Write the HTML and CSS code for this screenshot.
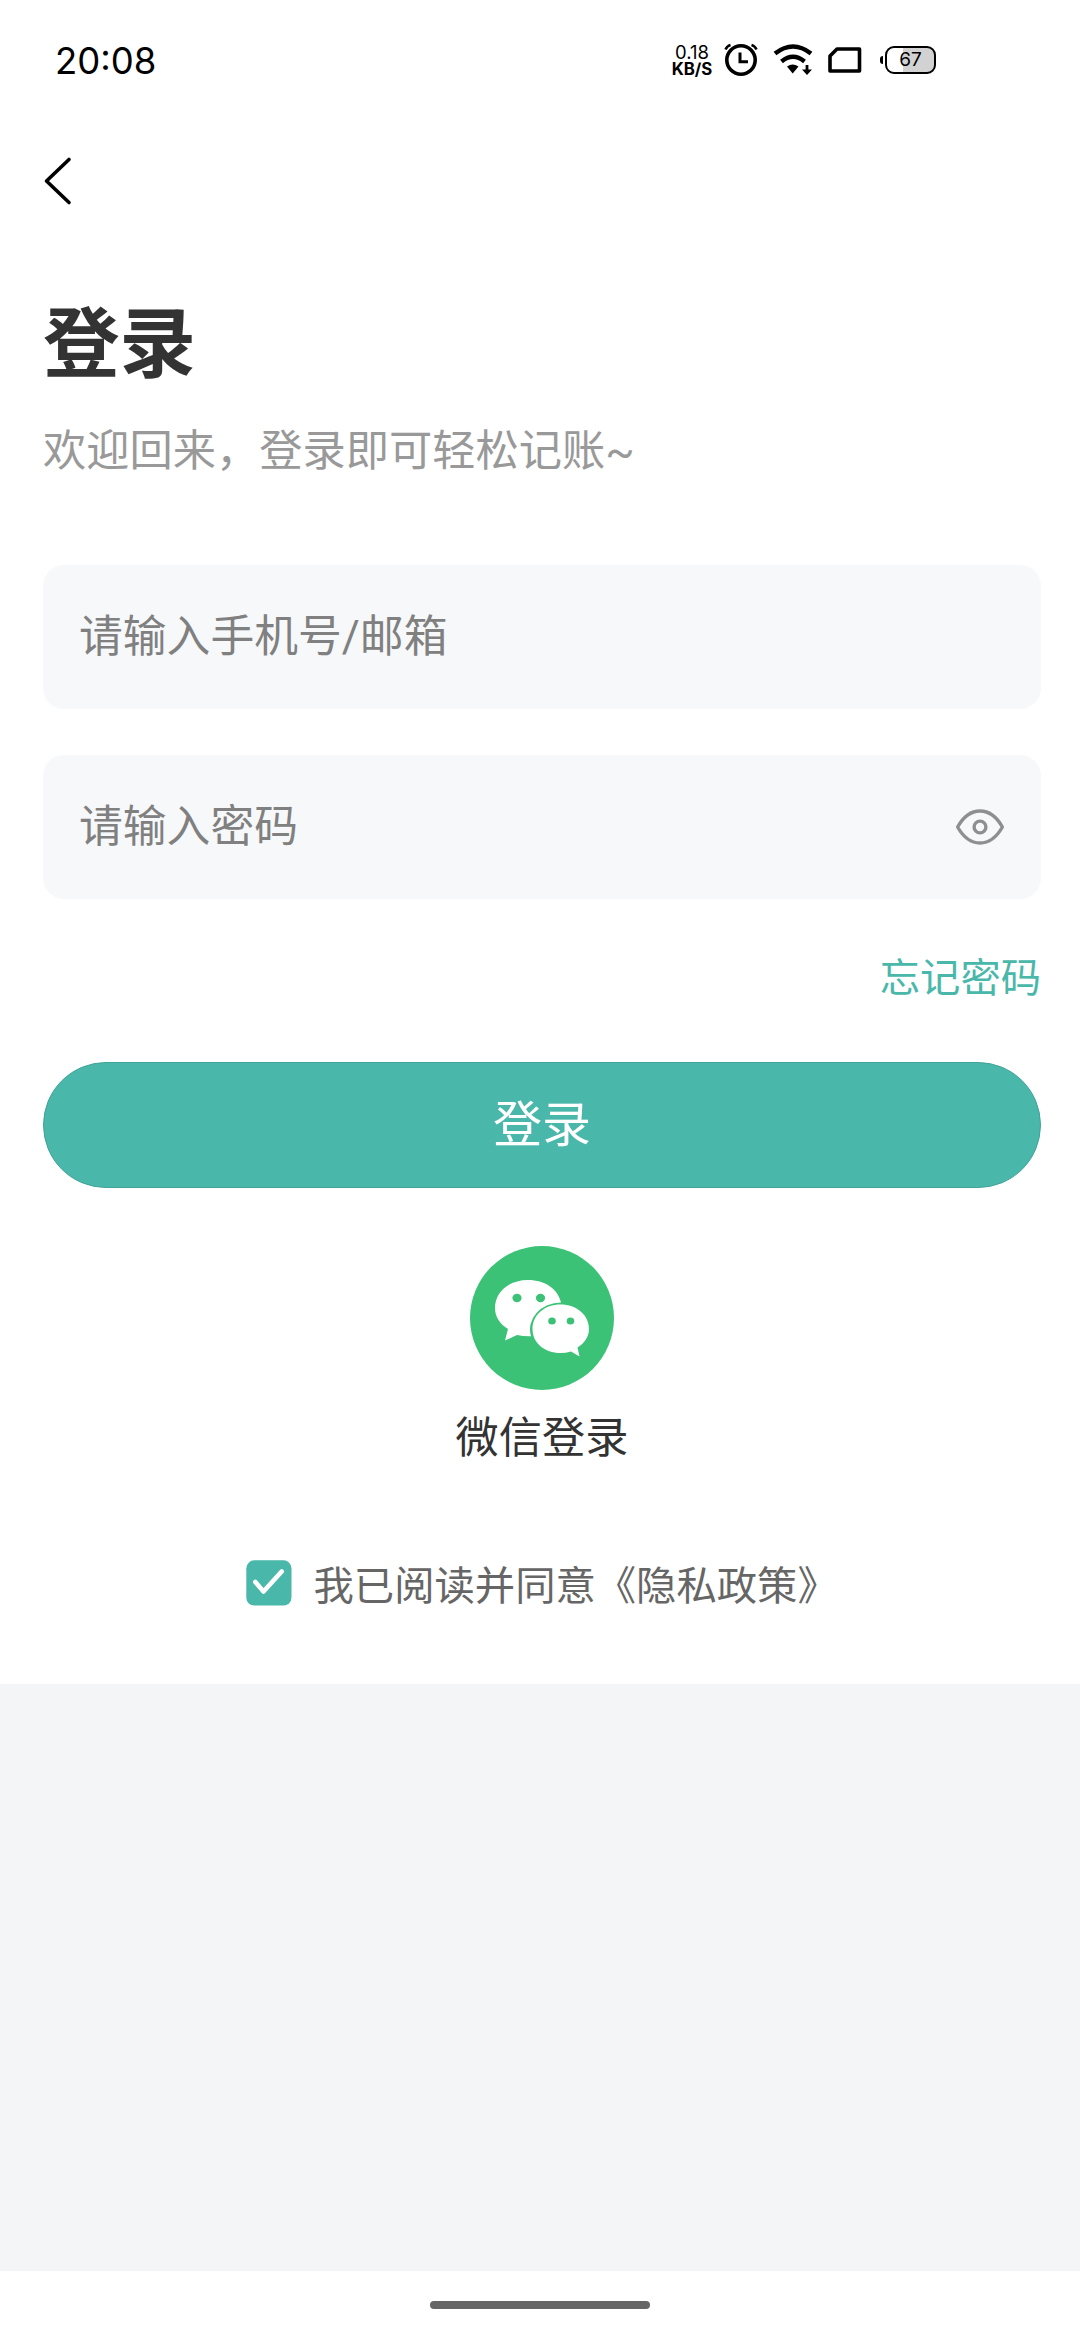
FILE: index.html
```html
<!DOCTYPE html>
<html lang="zh-CN">
<head>
<meta charset="utf-8">
<title>登录</title>
<link rel="stylesheet" href="styles.css">
</head>
<body>
<div class="screen">
  <header class="status">
    <span class="clock">20:08</span>
    <div class="indicators">
      <div class="rate"><span class="rate-value">0.18</span><span class="rate-unit">KB/S</span></div>
      <svg class="alarm" width="34" height="34" viewBox="0 0 34 34" fill="none" stroke="#000">
        <circle cx="17" cy="18" r="14.2" stroke-width="3.6"/>
        <path d="M16 10.5v9.3h8" stroke-width="3"/>
        <path d="M1.5 7.5Q3 4 6.500 3M32.500 7.500Q31 4 27.500 3" stroke-width="2.600"/>
      </svg>
      <svg class="wifi" width="40" height="34" viewBox="0 0 40 34" fill="none" stroke="#000">
        <path d="M2 11.500Q20 -2.500 38 11.500" stroke-width="4.400"/>
        <path d="M8.500 19.500Q20 10 31.500 19.500" stroke-width="4.400"/>
        <path d="M14 24.500Q19.500 20.500 25.500 24.500L19.700 31.500Z" fill="#000" stroke="none"/>
        <path d="M34 23v7" stroke-width="2.800"/>
        <path d="M29 27.500h10l-5 5.500z" fill="#000" stroke="none"/>
      </svg>
      <svg class="sim" width="34" height="28" viewBox="0 0 34 28" fill="none" stroke="#000" stroke-width="3.600">
        <path d="M9 3H31.500V25H2V10Z" stroke-linejoin="round"/>
      </svg>
      <div class="battery"><span class="battery-level">67</span></div>
    </div>
  </header>
  <nav class="nav">
    <svg width="32" height="50" viewBox="0 0 32 50" fill="none" stroke="#000" stroke-width="3.600" stroke-linecap="round" stroke-linejoin="round">
      <path d="M27 3.500 4.500 25 27 46.500"/>
    </svg>
  </nav>
  <main class="login">
    <h1 class="title">登录</h1>
    <p class="subtitle">欢迎回来，登录即可轻松记账<span class="latin">~</span></p>
    <div class="field"><span>请输入手机号<span class="latin">/</span>邮箱</span></div>
    <div class="field"><span>请输入密码</span>
      <svg width="50" height="38" viewBox="0 0 50 38" fill="none" stroke="#8f8f8f" stroke-width="3.400" stroke-linejoin="round">
        <path d="M2.600 19C8 9.500 15.500 3 25 3S42 9.500 47.400 19C42 28.500 34.500 35 25 35S8 28.500 2.600 19Z"/>
        <circle cx="25" cy="19" r="5.900"/>
      </svg>
    </div>
    <a class="forgot">忘记密码</a>
    <button class="submit">登录</button>
    <div class="wechat">
      <svg width="144" height="144" viewBox="0 0 144 144">
        <circle cx="72" cy="72" r="72" fill="#3cc276"/>
        <path fill="#fff" d="M58 34C39 34 25 46 25 62C25 71 30 78 38 83L35 94.500 47 89Q54 90.500 61 90.300A31 27 0 0 1 91 56.500C88 43 75 34 58 34Z"/>
        <path fill="#fff" d="M90.500 58.500C74.500 58.500 62.500 69 62.500 83S74.500 107 90.500 107Q96 107 101 105.500L109.500 110.500 107.500 101.500C114.500 97.500 119 90.500 119 83C119 69 106.500 58.500 90.500 58.500Z"/>
        <g fill="#3cc276"><ellipse cx="47" cy="52" rx="4.600" ry="4.200"/><ellipse cx="70.500" cy="52" rx="4.600" ry="4.200"/><ellipse cx="82" cy="75" rx="3.800" ry="3.500"/><ellipse cx="100.500" cy="75" rx="3.800" ry="3.500"/></g>
      </svg>
      <span>微信登录</span>
    </div>
    <div class="agree">
      <svg width="46" height="46" viewBox="0 0 46 46">
        <rect x=".3" y=".3" width="45.200" height="45.200" rx="8" fill="#4ab7ab"/>
        <path d="M9.300 22 17.500 31.500 35.700 11.500" fill="none" stroke="#fff" stroke-width="4.600" stroke-linecap="round" stroke-linejoin="round"/>
      </svg>
      <span>我已阅读并同意《隐私政策》</span>
    </div>
  </main>
  <footer class="gesture"><div class="handle"></div></footer>
</div>
</body>
</html>
```
FILE: styles.css
```css
* { box-sizing: border-box; }
body { margin: 0; }
.screen {
  width: 1080px;
  height: 2340px;
  display: flex;
  flex-direction: column;
  background: #f4f5f7;
  font-family: "Noto Sans CJK SC", sans-serif;
}
svg { display: block; flex: none; }
.status {
  height: 120px;
  background: #fff;
  display: flex;
  justify-content: space-between;
  padding: 0 144px 0 55px;
  font-family: Inter, sans-serif;
  color: #000;
}
.clock { font-size: 36.500px; line-height: 122px; }
.indicators { display: flex; align-items: flex-start; padding-top: 42px; }
.rate {
  width: 42px;
  margin: 2px 11px 0 0;
  display: flex;
  flex-direction: column;
  align-items: center;
}
.rate-value { font-size: 18.500px; line-height: 17px; letter-spacing: 0; }
.rate-unit { font-size: 16.800px; line-height: 17px; font-weight: 650; }
.wifi { margin-left: 15px; }
.sim { margin: 4px 0 0 15px; }
.battery {
  position: relative;
  width: 51px;
  height: 28px;
  margin: 4px 0 0 23px;
  border: 2.500px solid #000;
  border-radius: 9px;
  background: linear-gradient(90deg, #fff 33%, #d2d2d2 33%);
  text-align: center;
}
.battery::before {
  content: "";
  position: absolute;
  left: -7px;
  top: 8px;
  width: 3px;
  height: 8px;
  border-radius: 3px 0 0 3px;
  background: #000;
}
.battery-level { display: block; font-size: 19px; line-height: 23px; font-weight: 400; }
.nav { height: 120px; padding: 36px 0 0 42px; background: #fff; }
.login {
  height: 1444px;
  padding: 48px 39px 0 43px;
  background: #fff;
  display: flex;
  flex-direction: column;
}
.latin { font-family: Roboto, sans-serif; line-height: 0; }
.title { margin: 0; font-size: 76.500px; line-height: 100px; font-weight: 700; color: #333; }
.subtitle { margin: 28px 0 87px; font-size: 43.250px; line-height: 62px; color: #999; }
.field {
  height: 144px;
  margin-bottom: 46px;
  padding: 0 36px;
  border-radius: 21px;
  background: #f7f8fa;
  display: flex;
  align-items: center;
  justify-content: space-between;
  font-size: 43.800px;
  color: #808080;
}
.field > span { line-height: 60px; padding-bottom: 8px; }
.forgot { align-self: flex-end; font-size: 40.300px; line-height: 60px; color: #4ab7ab; }
.submit {
  height: 126px;
  margin: 57px 0 58px;
  padding: 0 0 8px;
  border: 1px solid #42a398;
  border-radius: 63px;
  background: #4ab7ab;
  font: 49px/70px "Noto Sans CJK SC", sans-serif;
  color: #fff;
}
.wechat { display: flex; flex-direction: column; align-items: center; font-size: 43.200px; line-height: 60px; color: #333; }
.wechat span { margin-top: 14px; }
.agree { display: flex; margin: 96px 0 0 203px; font-size: 40.350px; line-height: 46px; color: #666; gap: 21.500px; }
.gesture { height: 69px; margin-top: auto; padding-top: 30px; background: #fff; }
.handle { width: 220px; height: 8px; margin: 0 auto; border-radius: 4px; background: #666; }
```
